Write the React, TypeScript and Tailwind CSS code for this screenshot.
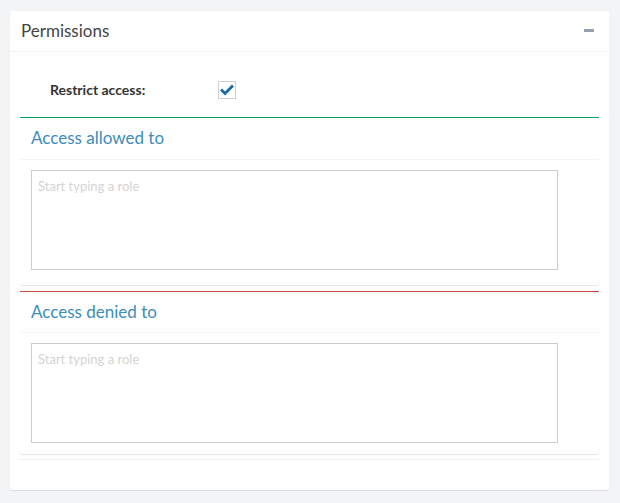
import React from "react";

const font = { fontFamily: '"Source Sans Pro", Lato, "Noto Sans", sans-serif' };

function RoleBox({
  title,
  accent,
  headH,
  padB,
}: {
  title: string;
  accent: string;
  headH: string;
  padB: string;
}) {
  return (
    <div className={`bg-white border-t ${accent} rounded-b-[3px] shadow-[0_1px_1px_rgba(0,0,0,0.1)]`}>
      <div className={`${headH} flex items-center pl-[11px] border-b border-[#f4f4f4]`}>
        <span className="text-[17px] text-[#3c8dbc] leading-none -mt-[2px]">{title}</span>
      </div>
      <div className={`pt-[10px] ${padB} pl-[11px]`}>
        <textarea
          placeholder="Start typing a role"
          className="block w-[527px] h-[100px] border border-[#cccccc] px-[6px] py-[7px] text-[13px] leading-[16px] text-[#555] placeholder:text-[#d4d4d4] resize-none outline-none"
          style={font}
        />
      </div>
    </div>
  );
}

export default function App() {
  return (
    <div className="w-[620px] h-[503px] bg-[#f3f4f6] pt-[11px] pl-[10px] pr-[11px]" style={font}>
      <div className="bg-white rounded-[3px] shadow-[0_1px_1px_rgba(0,0,0,0.1)] h-[479px]">
        <div className="h-[41px] flex items-center justify-between pl-[11px] pr-[15px] border-b border-[#f4f4f4]">
          <span className="text-[17px] text-[#444] leading-none -mt-[2px]">Permissions</span>
          <span className="block w-[10px] h-[3px] bg-[#97a0b3] -mt-[2px]" />
        </div>
        <div className="px-[10px] pt-[10px]">
          <div className="h-[55px] flex items-center">
            <span className="pl-[30px] w-[198px] text-[14px] font-bold text-[#333] -mt-[1px]">Restrict access:</span>
            <span className="w-[18px] h-[18px] border border-[#cfcfcf] bg-white flex items-center justify-center">
              <svg width="14" height="12" viewBox="0 0 14 12">
                <path d="M1 5.5 L5 9.5 L13 1.5" fill="none" stroke="#1e6ea3" strokeWidth="3" strokeLinejoin="miter" />
              </svg>
            </span>
          </div>
          <RoleBox title="Access allowed to" accent="border-[#00a65a]" headH="h-[42px]" padB="pb-[15px]" />
          <div className="h-[6px]" />
          <RoleBox title="Access denied to" accent="border-[#c9483b]" headH="h-[41px]" padB="pb-[11px]" />
          <div className="mt-[5px] border-t border-[#f0f0f0]" />
        </div>
      </div>
    </div>
  );
}
